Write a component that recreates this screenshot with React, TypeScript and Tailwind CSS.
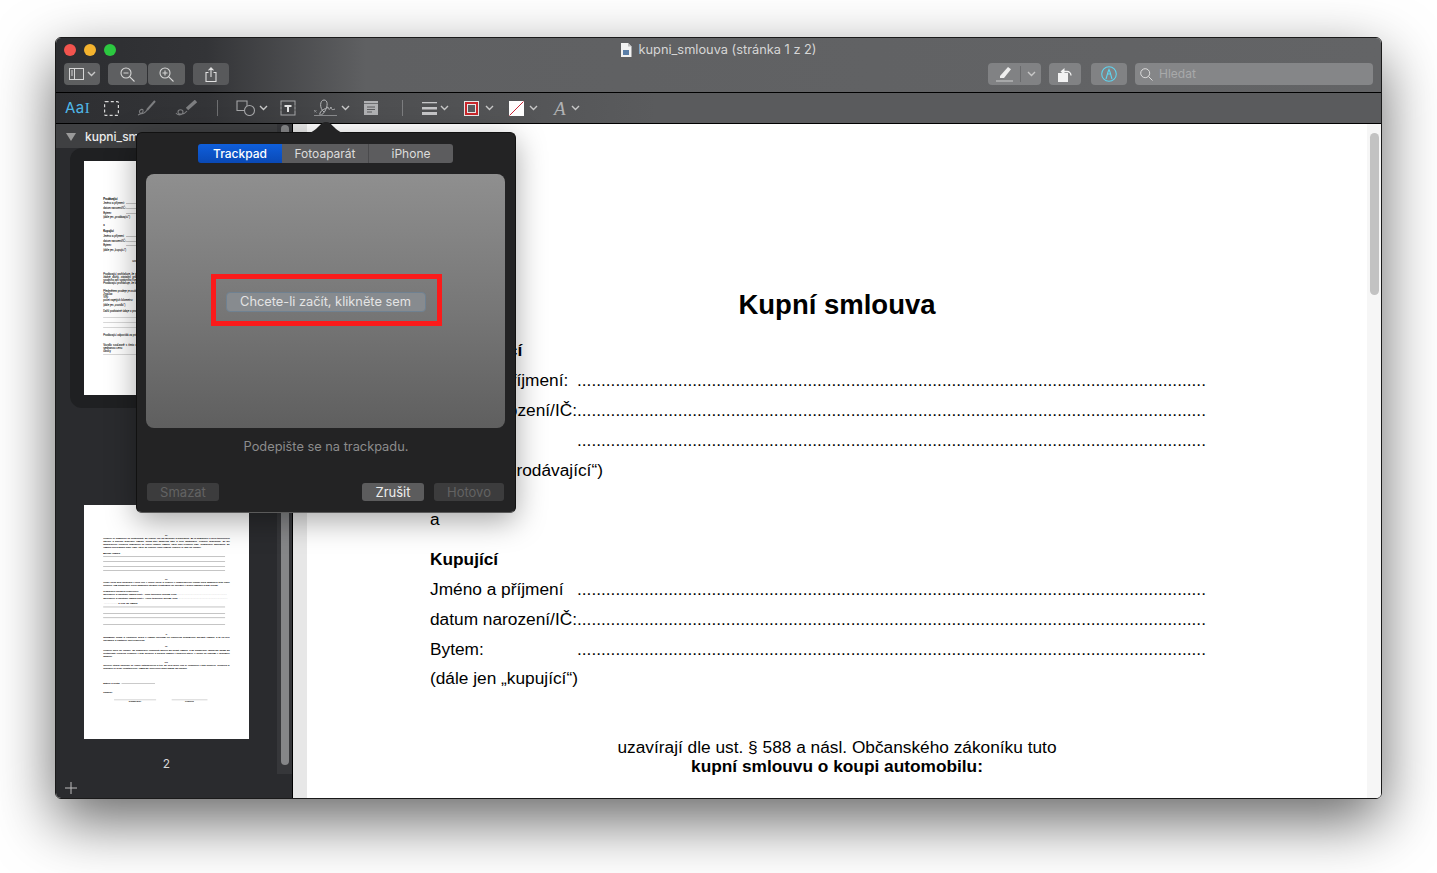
const Chevron = ({ className = '' }: { className?: string }) => (
  <svg width="9" height="6" viewBox="0 0 9 6" fill="none" stroke="#c8c8c8" strokeWidth="1.4" className={className}>
    <path d="M1 1l3.5 3.5L8 1" />
  </svg>
)

const Btn = ({ className = '', children }: { className?: string; children?: React.ReactNode }) => (
  <div className={`flex h-[22px] items-center justify-center rounded-[4px] bg-[#6a6b6d]/80 ${className}`}>{children}</div>
)

function Row({ label, dots, className = '' }: { label: string; dots?: boolean; className?: string }) {
  return (
    <div className={`flex h-[30px] items-center whitespace-nowrap ${className}`}>
      <span className="min-w-[147px]">{label}</span>
      {dots && <span className="flex-1 overflow-hidden">{'.'.repeat(150)}</span>}
    </div>
  )
}

function PageOne() {
  return (
    <div className="h-[1500px] w-[1060px] bg-white pl-[123px] pr-[160px] pt-[182px] font-['Liberation_Sans',sans-serif] text-[17.3px] leading-[19px] text-black">
      <h1 className="ml-[-123px] mr-[-160px] text-center text-[27.5px] font-bold leading-[32px]">Kupní smlouva</h1>
      <Row label="Prodávající" className="mt-[14px] font-bold" />
      <Row label="Jméno a příjmení:" dots />
      <Row label="datum narození/IČ:" dots />
      <Row label="Bytem:" dots />
      <Row label="(dále jen „prodávající“)" />
      <Row label="a" className="mt-[19px]" />
      <Row label="Kupující" className="mt-[10px] font-bold" />
      <Row label="Jméno a příjmení" dots />
      <Row label="datum narození/IČ:" dots />
      <Row label="Bytem:" dots />
      <Row label="(dále jen „kupující“)" className="-mt-px" />
      <div className="ml-[-123px] mr-[-160px] mt-[45px] text-center">
        uzavírají dle ust. § 588 a násl. Občanského zákoníku tuto
        <br />
        <b>kupní smlouvu o koupi automobilu:</b>
      </div>
      <p className="mt-[50px] text-justify">
        Prodávající prohlašuje, že je výlučným vlastníkem níže uvedeného vozidla a že na vozidle neváznou žádné dluhy,
        zástavní práva ani jiné právní povady. Vozidlo není předmětem žádného sporu, soudního ani správního řízení, a
        prodávající není nijak omezen v nakládání s ním, a to ani smluvně. Prodávající prohlašuje, že kupujícího
        seznámil se stavem vozidla.
      </p>
      <p className="mt-[30px]">Předmětem prodeje je osobní automobil:</p>
      <p>Značka:</p>
      <p>VIN:</p>
      <p>počet najetých kilometrů:</p>
      <p className="mt-[16px]">(dále jen „vozidlo“)</p>
      <p className="mt-[20px]">Další podstatné údaje o prodávaném vozidle:</p>
      <div className="mt-[32px] h-px bg-black" />
      <div className="mt-[30px] h-px bg-black" />
      <div className="mt-[32px] h-px bg-black" />
      <p className="mt-[36px]">Prodávající odpovídá za právní bezvadnost vozidla.</p>
      <p className="mt-[44px] text-justify">
        Vozidlo současně s tímto dokladem předává kupujícímu včetně všech dokladů a příslušenství, za sjednanou cenu
      </p>
      <p>částky</p>
      <div className="mt-[12px] h-px bg-black" />
    </div>
  )
}

const Rule = ({ className = '' }: { className?: string }) => <div className={`h-[2px] bg-[#444] ${className}`} />

function PageTwo() {
  return (
    <div className="h-[1500px] w-[1060px] bg-white pl-[123px] pr-[124px] pt-[183px] font-['Liberation_Sans',sans-serif] text-[16px] leading-[19px] text-black">
      <p className="text-center font-bold">III.</p>
      <p className="mt-[3px] text-justify">
        Kupující je srozuměn se skutečností, že kupuje věc již užívanou a prohlašuje, že je seznámen s jejím technickým
        stavem a provedl prohlídku vozidla, jehož stav odpovídá stáří a míře opotřebení. Kupující prohlašuje, že byl
        prodávajícím výslovně seznámen se všemi vadami vozidla, které jsou uvedeny níže. Prodávající prohlašuje, že
        vozidlo nemá žádné další vady, které by kupující mohl neznat, kupující je vzal na vědomí.
      </p>
      <p className="mt-[20px]">Závady vozidla:</p>
      <Rule className="mt-[12px] mr-[30px]" />
      <Rule className="mt-[26px] mr-[30px]" />
      <Rule className="mt-[30px] mr-[30px]" />
      <Rule className="mt-[26px] mr-[30px]" />
      <p className="mt-[44px] text-center font-bold">IV.</p>
      <p className="mt-[3px] text-justify">
        Kupní cena byla sjednána v plné výši v české měně a kupující ji prodávajícímu uhradil před podpisem této kupní
        smlouvy, což prodávající svým podpisem stvrzuje a potvrzuje její převzetí v plném rozsahu a bez výhrad.
      </p>
      <p className="mt-[16px]">Prodávající předává kupujícímu:</p>
      <p>Osvědčení o registraci vozidla část I. (malý technický průkaz) číslo ........................................................................</p>
      <p className="mt-[11px]">Osvědčení o registraci vozidla část II. (velký technický průkaz) číslo .......................................................................</p>
      <p className="mt-[11px] pl-[4px]">.................... a klíče od vozidla</p>
      <Rule className="mt-[14px] mr-[30px]" />
      <Rule className="mt-[40px] mr-[30px]" />
      <Rule className="mt-[26px] mr-[30px]" />
      <Rule className="mt-[40px] mr-[30px]" />
      <p className="mt-[52px] text-center font-bold">V.</p>
      <p className="mt-[3px] text-justify">
        Nebezpečí škody a vlastnické právo k vozidlu přechází na kupujícího okamžikem převzetí vozidla, a to na celý
        nákladový a částečný účet kupujícího.
      </p>
      <p className="mt-[20px] text-center font-bold">VI.</p>
      <p className="mt-[3px] text-justify">
        Kupující bere na vědomí, že prodávající neposkytl záruku za jakost vozidla, a že prodávající odpovídá pouze za
        skutečnosti výslovně uvedené v této smlouvě a přebírá vozidlo v takovém stavu, v jakém se nachází v okamžiku
        podpisu.
      </p>
      <p className="mt-[20px] text-center font-bold">VII.</p>
      <p className="mt-[3px] text-justify">
        Smluvní strany souhlasí se všemi ustanoveními a tím, že celá jejich vůle je vyjádřena v této smlouvě. Smlouva je
        sepsána ve dvou vyhotoveních, každá ze smluvních stran obdrží po jednom.
      </p>
      <div className="mt-[76px] flex items-center">
        <span>Datum a místo:</span>
        <span className="ml-[10px] h-[2px] w-[215px] bg-[#555]" />
      </div>
      <p className="mt-[36px]">Podpisy:</p>
      <div className="ml-[70px] mt-[42px] flex gap-[100px]">
        <div className="w-[270px] border-t-2 border-[#777] text-center">Prodávající</div>
        <div className="w-[230px] border-t-2 border-[#777] text-center">Kupující</div>
      </div>
    </div>
  )
}

function Thumb({ children }: { children: React.ReactNode }) {
  return (
    <div className="h-[234px] w-[165px] overflow-hidden bg-white [-webkit-text-stroke:0.3px_#000]">
      <div className="origin-top-left scale-[0.1557]">{children}</div>
    </div>
  )
}

function TitleBar() {
  return (
    <div className="h-[55px] border-b border-black bg-[linear-gradient(to_right,#2c2d30_0px,#333437_150px,#5f6062_310px,#636466_100%)] px-[8px]">
      <div className="grid h-[24px] grid-cols-[1fr_auto_1fr] items-center">
        <div className="flex gap-[8px]">
          <div className="h-[12px] w-[12px] rounded-full bg-[#f2544e]" />
          <div className="h-[12px] w-[12px] rounded-full bg-[#f4b32e]" />
          <div className="h-[12px] w-[12px] rounded-full bg-[#2cc840]" />
        </div>
        <div className="flex items-center gap-[6px] text-[12.8px] text-[#d6d6d6]">
          <svg width="12" height="14" viewBox="0 0 12 14">
            <path d="M1 0h7l3.5 3.5V14H1z" fill="#f2f2f2" />
            <path d="M8 0v3.5h3.5z" fill="#bdbdbd" />
            <rect x="3" y="7" width="6" height="5" fill="#5b7fa8" />
          </svg>
          <span>kupni_smlouva (stránka 1 z 2)</span>
        </div>
        <div />
      </div>
      <div className="mt-[1px] flex items-center">
        <Btn className="w-[36px] gap-[3px] bg-[#4a4b4e]">
          <svg width="15" height="12" viewBox="0 0 15 12" fill="none" stroke="#d6d6d6">
            <rect x="0.5" y="0.5" width="14" height="11" />
            <path d="M5.5 0.5v11M2 3h2M2 5h2M2 7h2" />
          </svg>
          <Chevron />
        </Btn>
        <Btn className="ml-[8px] w-[39px] bg-[#4a4b4e]">
          <svg width="15" height="15" viewBox="0 0 15 15" fill="none" stroke="#d6d6d6" strokeWidth="1.1">
            <circle cx="6" cy="6" r="5" />
            <path d="M3.5 6h5M9.8 9.8l4.7 4.7" />
          </svg>
        </Btn>
        <Btn className="ml-px w-[37px] bg-[#4a4b4e]">
          <svg width="15" height="15" viewBox="0 0 15 15" fill="none" stroke="#d6d6d6" strokeWidth="1.1">
            <circle cx="6" cy="6" r="5" />
            <path d="M3.5 6h5M6 3.5v5M9.8 9.8l4.7 4.7" />
          </svg>
        </Btn>
        <Btn className="ml-[8px] w-[36px] bg-[#58595b]">
          <svg width="12" height="15" viewBox="0 0 12 15" fill="none" stroke="#e0e0e0" strokeWidth="1.1">
            <path d="M3.5 5.500H1v9h10v-9H8.500M6 10V1M3.500 3.300L6 .8l2.500 2.500" />
          </svg>
        </Btn>
        <Btn className="ml-auto w-[53px] justify-start bg-[#818284]">
          <div className="flex w-[33px] justify-center border-r border-[#6a6b6d]">
            <svg width="19" height="16" viewBox="0 0 19 16" fill="#eee">
              <path d="M5 10L13 1l3 2.200L9 12H5z" />
              <path d="M1 14.500h17v1H1z" opacity=".7" />
            </svg>
          </div>
          <div className="flex flex-1 justify-center">
            <Chevron />
          </div>
        </Btn>
        <Btn className="ml-[8px] w-[32px] bg-[#818284]">
          <svg width="15" height="15" viewBox="0 0 15 15" fill="none">
            <rect x="0" y="6" width="10" height="9" fill="#f2f2f2" />
            <path d="M5 4.500h4a4 4 0 0 1 4 4" stroke="#f2f2f2" strokeWidth="1.3" />
            <path d="M6.500 1v7L2.500 4.500z" fill="#f2f2f2" />
          </svg>
        </Btn>
        <Btn className="ml-[10px] w-[36px] bg-[#818284]">
          <svg width="16" height="16" viewBox="0 0 16 16" fill="none" stroke="#5fd4ef" strokeWidth="1.1">
            <circle cx="8" cy="8" r="7.300" />
            <path d="M5 13l2-7 1-2.500L9 6l2 7M6.500 8h3" />
          </svg>
        </Btn>
        <div className="ml-[8px] flex h-[22px] w-[238px] items-center gap-[6px] rounded-[4px] bg-[#858688] pl-[5px] text-[12px] text-[#a8a9aa]">
          <svg width="13" height="13" viewBox="0 0 13 13" fill="none" stroke="#dcdcdc" strokeWidth="1">
            <circle cx="5.200" cy="5.200" r="4.500" />
            <path d="M8.500 8.500l4 4" />
          </svg>
          Hledat
        </div>
      </div>
    </div>
  )
}

function MarkupBar() {
  return (
    <div className="flex h-[31px] items-center border-b border-black bg-[linear-gradient(to_right,#2e2f32_0px,#333437_150px,#4d4e50_310px,#5a5b5d_600px,#5a5b5d_100%)]">
      <span className="ml-[9px] w-[24px] whitespace-nowrap text-[15px] leading-none tracking-[0.5px] text-[#4fb8e8]">
        Aa<span className="font-['Liberation_Serif',serif] font-light">I</span>
      </span>
      <svg className="ml-[15px]" width="15" height="15" viewBox="0 0 15 15" fill="none" stroke="#d8d8d8" strokeWidth="1.2">
        <rect x="0.6" y="0.6" width="13.8" height="13.8" rx="1" strokeDasharray="3 2.2" />
      </svg>
      <svg className="ml-[18px]" width="21" height="16" viewBox="0 0 21 16" fill="none" stroke="#7d7e80" strokeWidth="1.1">
        <path d="M1 15c3-1 6-3 5-5S1 11 3 13s6-1 7-3" />
        <path d="M10 10L18 1" strokeWidth="2" />
      </svg>
      <svg className="ml-[17px]" width="23" height="16" viewBox="0 0 23 16" fill="none" stroke="#7d7e80" strokeWidth="1.1">
        <path d="M1 13c2 3 7 2 7-1s-5-3-5 0 6 3 9-1" />
        <path d="M12 9l9-8" strokeWidth="3.5" />
      </svg>
      <div className="ml-[19px] h-[16px] w-px bg-[#6e6f71]" />
      <svg className="ml-[18px]" width="21" height="16" viewBox="0 0 21 16" fill="none" stroke="#a5a6a8" strokeWidth="1.1">
        <path d="M9 10.500H1V1h10v5" />
        <circle cx="13.500" cy="10.500" r="5" />
      </svg>
      <Chevron className="ml-[2px]" />
      <svg className="ml-[12px]" width="16" height="16" viewBox="0 0 16 16" fill="none">
        <rect x="1" y="1" width="14" height="14" stroke="#a5a6a8" strokeWidth="1" />
        <path d="M4.500 5h7v2H9v5H7V7H4.500z" fill="#e2e2e2" />
        <path d="M0 6h2M0 10h2M14 6h2M14 10h2" stroke="#555" />
      </svg>
      <svg className="ml-[18px]" width="24" height="18" viewBox="0 0 24 18" fill="none" stroke="#b5b6b8" strokeWidth="1">
        <path d="M10 13C5 9 6 1 10 1s4 6 1 11-6 5-5 2 5-4 8-6c0 3 2 3 3 0 0 3 2 3 4 2" />
        <path d="M0 16.500h23" stroke="#8b8c8e" />
        <path d="M0 11l2.500 2.500M2.500 11L0 13.500" stroke="#8b8c8e" />
      </svg>
      <Chevron className="ml-[3px]" />
      <svg className="ml-[14px]" width="14" height="14" viewBox="0 0 14 14">
        <rect width="14" height="14" fill="#b0b1b3" />
        <path d="M0 2.500h14" stroke="#6e6f71" />
        <path d="M3 6h8M3 8.500h8M3 11h5" stroke="#5a5b5d" />
      </svg>
      <div className="ml-[24px] h-[16px] w-px bg-[#7c7d7f]" />
      <svg className="ml-[19px]" width="15" height="13" viewBox="0 0 15 13" fill="#c5c5c7">
        <rect width="15" height="1.300" />
        <rect y="5" width="15" height="2.500" />
        <rect y="10" width="15" height="3" />
      </svg>
      <Chevron className="ml-[3px]" />
      <div className="ml-[15px] flex h-[15px] w-[15px] items-center justify-center border border-[#e8e8e8] bg-[#c8282c]">
        <div className="h-[9px] w-[9px] border border-[#e8e8e8] bg-[#5a5b5d]" />
      </div>
      <Chevron className="ml-[6px]" />
      <svg className="ml-[15px]" width="15" height="15" viewBox="0 0 15 15">
        <rect width="15" height="15" fill="#fff" />
        <path d="M0.500 14.500L14.500 .5" stroke="#c8283a" />
      </svg>
      <Chevron className="ml-[5px]" />
      <span className="ml-[16px] w-[15px] font-['Liberation_Serif',serif] text-[19px] italic leading-none text-[#b0b1b3]">A</span>
      <Chevron className="ml-[2px]" />
    </div>
  )
}

function Sidebar() {
  return (
    <div className="flex h-full w-[237px] border-r border-black bg-[#2a2b2e]">
      <div className="flex w-[221px] flex-col">
        <div className="flex h-[24px] items-center gap-[9px] bg-[#3f4042] pl-[10px] pt-px text-[12px] font-medium text-[#eee]">
          <div className="h-0 w-0 border-x-[5px] border-t-[8px] border-x-transparent border-t-[#9a9a9a]" />
          <span className="w-[52px] overflow-hidden whitespace-nowrap">kupni_smlouva</span>
        </div>
        <div className="ml-[14px] w-[193px] rounded-[12px] bg-[#1f2022] px-[14px] pb-[13px] pt-[13px]">
          <Thumb>
            <PageOne />
          </Thumb>
        </div>
        <div className="ml-[28px] mt-[97px]">
          <Thumb>
            <PageTwo />
          </Thumb>
        </div>
        <p className="ml-[28px] mt-[16px] w-[165px] text-center text-[12px] text-[#d8d8d8]">2</p>
        <svg className="ml-[9px] mt-[9px]" width="12" height="12" viewBox="0 0 12 12" stroke="#bdbdbd" strokeWidth="1">
          <path d="M6 0v12M0 6h12" />
        </svg>
      </div>
      <div className="h-[650px] w-[15px] bg-[#36373a] px-[4px] pt-[1px]">
        <div className="h-[640px] w-[8px] rounded-full bg-[#858688]" />
      </div>
    </div>
  )
}

function Popover() {
  return (
    <div className="absolute left-[80px] top-[94px] z-10 h-[381px] w-[380px] rounded-[6px] border border-[#111] border-b-[#5a5a5a] bg-[#232324] font-['Inter',sans-serif] shadow-[0_8px_30px_rgba(0,0,0,0.35)]">
      <svg className="absolute left-[166px] top-[-11px]" width="46" height="11" viewBox="0 0 46 11" fill="#232324">
        <path d="M0 11c8 0 10-1 15-6 4-4 5-5 8-5s4 1 8 5c5 5 7 6 15 6z" />
      </svg>
      <div className="ml-[-1px] mt-[11px] flex justify-center text-[12px] leading-[19px] text-[#dcdcdc]">
        <div className="w-[84px] rounded-l-[3px] bg-[linear-gradient(#0f5fdc,#0a49b5)] text-center font-medium text-white">Trackpad</div>
        <div className="w-[87px] border-r border-[#4a4a4c] bg-[#5c5c5e] text-center">Fotoaparát</div>
        <div className="w-[84px] rounded-r-[3px] bg-[#5c5c5e] text-center">iPhone</div>
      </div>
      <div className="ml-[9px] mr-[10px] mt-[11px] flex h-[254px] items-center justify-center rounded-[8px] bg-[linear-gradient(#8f8f8f,#767676_55%,#5f5f5f)]">
        <div className="mb-[2px] ml-[2px] flex h-[52px] w-[231px] items-center justify-center border-[5px] border-[#fb1b1b] pr-[2px] pt-[3px]">
          <div className="flex h-[20px] w-[200px] items-center justify-center rounded-[4px] border border-[#6f8191] bg-[#878b8f] text-[12.8px] text-[#e4e4e4]">
            Chcete-li začít, klikněte sem
          </div>
        </div>
      </div>
      <p className="mt-[11px] text-center text-[12.8px] leading-[16px] text-[#8c8c8c]">Podepište se na trackpadu.</p>
      <div className="mt-[28px] flex px-[10px] text-[13px] leading-[18px]">
        <div className="w-[72px] rounded-[3px] bg-[#3c3c3d] text-center text-[#636363]">Smazat</div>
        <div className="ml-auto w-[62px] rounded-[3px] bg-[#5c5c5d] text-center text-[#eee]">Zrušit</div>
        <div className="ml-[10px] mr-px w-[70px] rounded-[3px] bg-[#3c3c3d] text-center text-[#636363]">Hotovo</div>
      </div>
    </div>
  )
}

export default function App() {
  return (
    <div className="h-[873px] w-[1437px] overflow-hidden bg-white pl-[55px] pt-[37px] font-['Inter',sans-serif]">
      <div className="relative flex h-[762px] w-[1327px] flex-col overflow-hidden rounded-[6px] border border-[#1a1a1a] shadow-[0_22px_60px_rgba(0,0,0,0.6)]">
        <TitleBar />
        <MarkupBar />
        <div className="flex min-h-0 flex-1">
          <Sidebar />
          <div className="flex min-w-0 flex-1 bg-[#e7e7e7] pl-[14px]">
            <div className="h-full w-[1060px] overflow-hidden">
              <div className="-mt-[17px]">
                <PageOne />
              </div>
            </div>
            <div className="h-full flex-1 bg-[#f6f6f6] pl-[3px] pt-[9px]">
              <div className="h-[162px] w-[9px] rounded-full bg-[#c2c2c2]" />
            </div>
          </div>
        </div>
        <Popover />
      </div>
    </div>
  )
}
